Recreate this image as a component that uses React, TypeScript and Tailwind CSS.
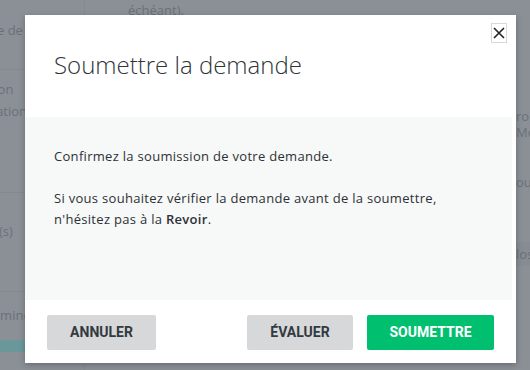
export default function App() {
  return (
    <div className="relative h-[370px] w-[530px] overflow-hidden bg-[#8b9097] font-['Open_Sans',sans-serif] text-[#6a7077]">
      {/* page behind the overlay */}
      <div className="flex h-full">
        <div className="flex w-[85px] flex-col border-r border-[#858a91]">
          <div className="flex h-[70px] items-center justify-end overflow-hidden whitespace-nowrap border-b border-[#858a91] pb-[8px] text-[13px]">
            Type de demande
          </div>
          <div className="flex h-[123px] flex-col overflow-hidden whitespace-nowrap border-b border-[#858a91] pt-[8px] text-[13px] leading-[22px]">
            <span className="-ml-[56px]">Description</span>
            <span className="-ml-[45px]">Information</span>
          </div>
          <div className="flex h-[99px] items-center justify-start overflow-hidden whitespace-nowrap border-b border-[#858a91] pb-[20px] text-[13px]">
            <span className="-ml-[1px]">(s)</span>
          </div>
          <div className="flex h-[48px] items-center overflow-hidden whitespace-nowrap text-[13px]">
            <span className="-ml-[44px]">Indéterminée</span>
          </div>
          <div className="h-[12px] bg-[#6a989a]" />
        </div>
        <div className="flex-1 pl-[43px] pt-[1px] text-[13px]">échéant).</div>
        <div className="flex w-[14px] flex-col overflow-hidden whitespace-nowrap pt-[108px] text-[13px] leading-[16px]">
          <span>ron</span>
          <span>Mo</span>
          <span className="mt-[34px]">ou</span>
          <span className="mt-[52px] bg-[#878c93] py-[4px]">los</span>
        </div>
      </div>

      {/* modal */}
      <div className="absolute left-[25px] top-[15px] flex h-[348px] w-[491px] flex-col bg-white shadow-[0_2px_6px_rgba(0,0,0,0.25)]">
        <div className="relative h-[102px] shrink-0 px-[29px] pt-[34px]">
          <h1 className="font-['Open_Sans',sans-serif] text-[24px] font-light leading-[32px] text-[#2f3539]">
            Soumettre la demande
          </h1>
          <button className="absolute right-[9px] top-[8px] flex h-[20px] w-[16px] items-center justify-center border border-[#d6d8da] bg-white text-[#222]">
            <svg viewBox="0 0 14 14" className="h-[14px] w-[14px]" fill="none" stroke="currentColor" strokeWidth="1.6">
              <path d="M2 2 L12 12 M12 2 L2 12" />
            </svg>
          </button>
        </div>
        <div className="mr-[4px] h-[183px] shrink-0 bg-[#f7f8f8] px-[29px] pt-[29px] text-[13px] leading-[21px] tracking-[0.3px] text-[#2d3135]">
          <p>Confirmez la soumission de votre demande.</p>
          <p className="mt-[21px]">
            Si vous souhaitez vérifier la demande avant de la soumettre,
            <br />
            n'hésitez pas à la <span className="font-semibold">Revoir</span>.
          </p>
        </div>
        <div className="flex flex-1 items-start px-[22px] pt-[15px] font-['Roboto',sans-serif] text-[14px] font-bold">
          <button className="h-[35px] w-[109px] rounded-[2px] bg-[#d6d8d9] text-[#333a3f]">ANNULER</button>
          <div className="flex-1" />
          <button className="h-[35px] w-[106px] rounded-[2px] bg-[#d6d8d9] text-[#333a3f]">ÉVALUER</button>
          <button className="ml-[14px] h-[35px] w-[127px] rounded-[2px] bg-[#00bf6f] text-white">SOUMETTRE</button>
        </div>
      </div>
    </div>
  )
}
